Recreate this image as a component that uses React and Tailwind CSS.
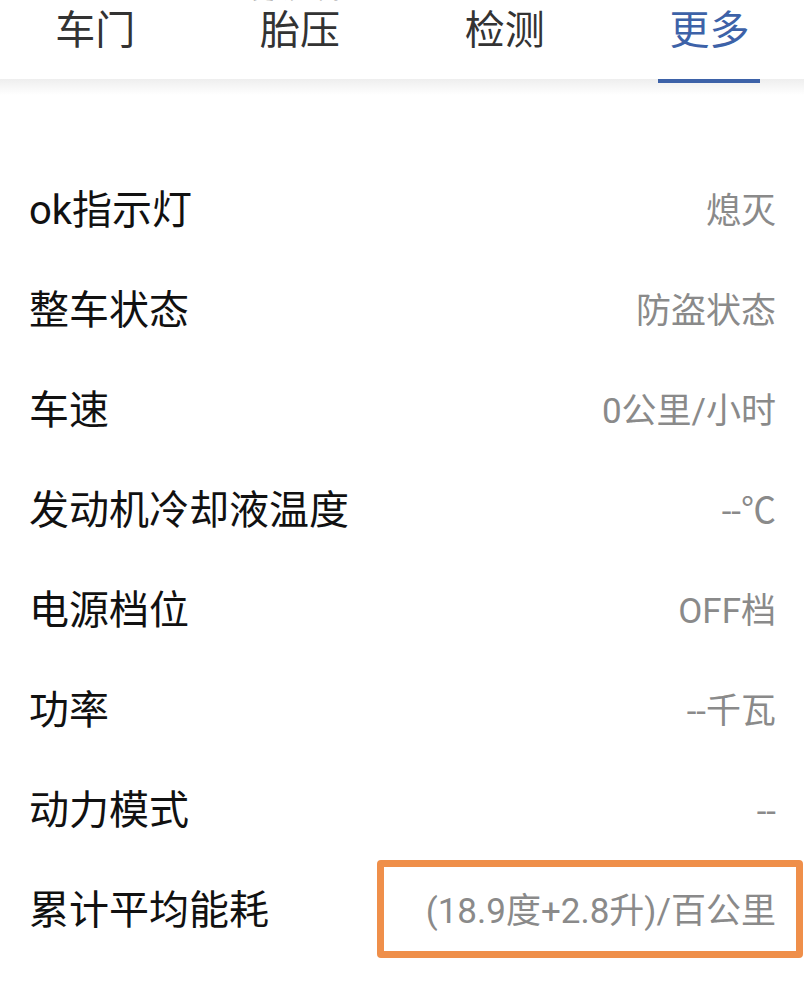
import React from 'react';

const tabs = ['车门', '胎压', '检测', '更多'];

const rows = [
  { label: 'ok指示灯', value: '熄灭' },
  { label: '整车状态', value: '防盗状态' },
  { label: '车速', value: '0公里/小时' },
  { label: '发动机冷却液温度', value: '--℃' },
  { label: '电源档位', value: 'OFF档' },
  { label: '功率', value: '--千瓦' },
  { label: '动力模式', value: '--' },
  { label: '累计平均能耗', value: '(18.9度+2.8升)/百公里', marked: true },
];

const App = () => {
  const active = 3;

  return (
    <div
      className="min-h-screen bg-white overflow-hidden"
      style={{ fontFamily: 'Roboto, "Noto Sans CJK SC", sans-serif' }}
    >
      {/* tab bar */}
      <div className="relative h-[79px] bg-white">
        <span className="absolute left-[252px] top-[-20px] text-[22px] leading-none text-[#999]">
          更新时间
        </span>
        <div className="flex ml-[-7px] h-full">
          {tabs.map((t, i) => (
            <div key={t} className="relative w-[204.7px] shrink-0 flex justify-center pt-[9px]">
              <span
                className={
                  'text-[40px] leading-[44px] ' +
                  (i === active ? 'text-[#3d62a8]' : 'text-[#333333]')
                }
              >
                {t}
              </span>
              {i === active && (
                <div className="absolute left-1/2 -translate-x-1/2 bottom-[-4px] w-[102px] h-[4px] bg-[#3d62a8] z-10" />
              )}
            </div>
          ))}
        </div>
      </div>
      <div className="h-[16px] bg-gradient-to-b from-[#eeeeee] to-white" />

      {/* info list */}
      <div className="pt-[66px]">
        {rows.map((r) => (
          <div key={r.label} className="relative h-[100px] flex items-center justify-between pl-[29px] pr-[28px]">
            <span className="text-[40px] leading-none text-[#111111]">{r.label}</span>
            <span className="text-[35px] leading-none text-[#8a8a8a]">{r.value}</span>
            {r.marked && (
              <div className="absolute left-[377px] right-[1px] top-[-1px] h-[98px] border-[7px] border-[#ef8f4a] rounded-[4px]" />
            )}
          </div>
        ))}
      </div>
    </div>
  );
};

export default App;
